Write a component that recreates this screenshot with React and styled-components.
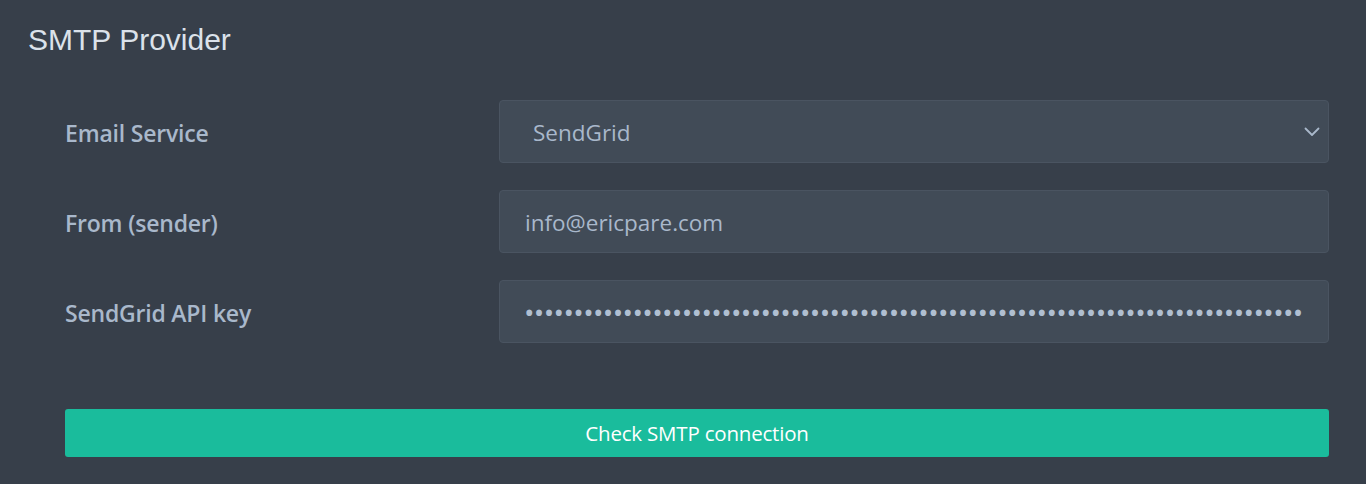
import React from "react";
import styled, { createGlobalStyle } from "styled-components";

const Global = createGlobalStyle`
  html, body { margin: 0; padding: 0; background: #373f4a; }
  body { font-family: "Open Sans", "Noto Sans", sans-serif; }
  * { box-sizing: border-box; }
`;

const Page = styled.div`
  width: 1366px;
  height: 484px;
  background: #373f4a;
  padding: 21px 37px 0 28px;
  overflow: hidden;
`;

const Title = styled.h2`
  margin: 0;
  font-family: "Liberation Sans", Arial, sans-serif;
  font-weight: 400;
  font-size: 30px;
  line-height: 37px;
  color: #dbe2ea;
`;

const Form = styled.div`
  margin-top: 42px;
  padding-left: 37px;
  display: grid;
  grid-template-columns: 434px 1fr;
  row-gap: 27px;
  align-items: center;
`;

const Label = styled.label`
  font-size: 23px;
  font-weight: 600;
  color: #a9b8cb;
  letter-spacing: -0.2px;
  padding-top: 2px;
`;

const FieldBox = styled.div`
  position: relative;
  height: 63px;
  background: #414b57;
  border: 1px solid #4a5461;
  border-radius: 4px;
  display: flex;
  align-items: center;
  padding: 2px ${(p) => (p.$select ? "33px" : "25px")} 0;
  color: #a9b8cb;
  font-size: 22.5px;
`;

const Dots = styled.span`
  letter-spacing: -0.67px;
  font-size: 28px;
  color: #b0bfd1;
  white-space: nowrap;
  overflow: hidden;
  margin-left: -1px;
  margin-top: -2px;
`;

const Chevron = styled.svg`
  position: absolute;
  right: 8px;
  top: 50%;
  transform: translateY(-50%);
`;

const Button = styled.button`
  grid-column: 1 / -1;
  margin-top: 39px;
  height: 48px;
  border: none;
  border-radius: 3px;
  background: #1abc9c;
  color: #ffffff;
  font-family: "Open Sans", "Noto Sans", sans-serif;
  font-size: 20.5px;
  letter-spacing: -0.2px;
  cursor: pointer;
`;

export default function App() {
  return (
    <>
      <Global />
      <Page>
        <Title>SMTP Provider</Title>
        <Form>
          <Label>Email Service</Label>
          <FieldBox $select>
            SendGrid
            <Chevron width="16" height="10" viewBox="0 0 16 10" fill="none">
              <path d="M1.5 1.5 L8 8 L14.5 1.5" stroke="#a9b8cb" strokeWidth="1.8" strokeLinecap="round" strokeLinejoin="round" />
            </Chevron>
          </FieldBox>
          <Label>From (sender)</Label>
          <FieldBox>info@ericpare.com</FieldBox>
          <Label>SendGrid API key</Label>
          <FieldBox>
            <Dots>{"•".repeat(79)}</Dots>
          </FieldBox>
          <Button>Check SMTP connection</Button>
        </Form>
      </Page>
    </>
  );
}
